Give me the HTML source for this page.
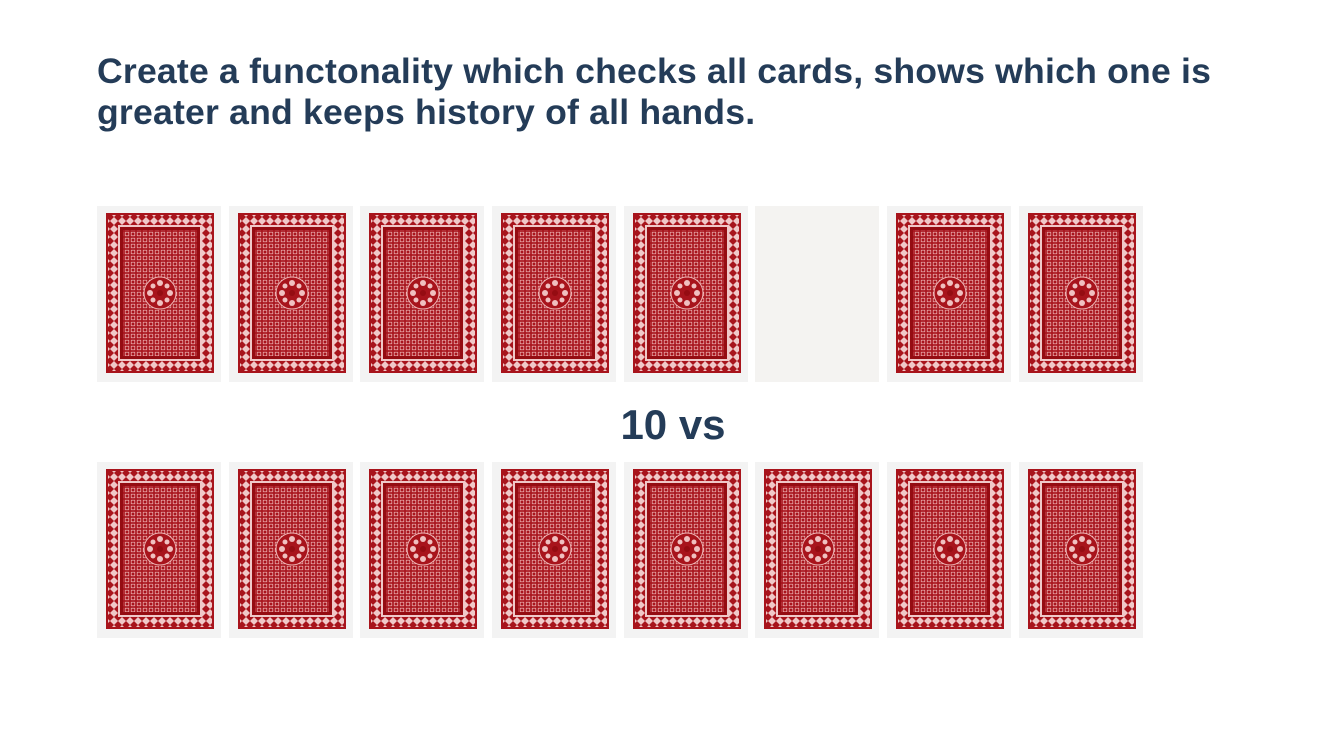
<!DOCTYPE html>
<html><head><style>
body{margin:0;width:1336px;height:733px;background:#fff;font-family:"Liberation Sans",sans-serif;overflow:hidden;position:relative}
h1{position:absolute;left:97px;top:51px;margin:0;font-size:35.6px;line-height:41px;color:#243c58;font-weight:bold;width:1150px;letter-spacing:0.2px}
.row{position:absolute;left:97px;display:flex;gap:7.7px}
.c{width:124px;height:176px;background:#f3f3f3;position:relative}
.c.e{background:#f4f3f1}
.c svg{position:absolute;left:9px;top:7px}
.vs{position:absolute;left:0;width:1346px;text-align:center;top:401px;font-size:42px;font-weight:bold;color:#243c58}
</style></head><body>
<h1>Create a functonality which checks all cards, shows which one is greater and keeps history of all hands.</h1>
<svg width="0" height="0" style="position:absolute">
<defs>
<pattern id="g" width="6" height="6" patternUnits="userSpaceOnUse"><rect width="6" height="6" fill="#a8141c"/><rect x="1.2" y="1.2" width="3.6" height="3.6" fill="none" stroke="#f0b8b8" stroke-width="0.7"/></pattern>
<pattern id="b" width="8" height="8" patternUnits="userSpaceOnUse"><rect width="8" height="8" fill="#f0c8c8"/><path d="M4 0L8 4L4 8L0 4Z" fill="#a8141c"/></pattern>
<symbol id="card" viewBox="0 0 108 160">
<rect x="0" y="0" width="108" height="160" fill="#a8141c"/>
<rect x="2" y="2" width="104" height="156" fill="url(#b)"/>
<rect x="12" y="12" width="84" height="136" fill="#f0c8c8"/>
<rect x="14" y="14" width="80" height="132" fill="#950c12"/>
<rect x="17" y="17" width="74" height="126" fill="url(#g)"/>
<circle cx="54" cy="80" r="16" fill="#a8141c" stroke="#f0b8b8" stroke-width="1"/>
<g fill="#f0c0c0"><circle cx="54" cy="70" r="3"/><circle cx="54" cy="90" r="3"/><circle cx="44" cy="80" r="3"/><circle cx="64" cy="80" r="3"/><circle cx="47" cy="73" r="2.5"/><circle cx="61" cy="73" r="2.5"/><circle cx="47" cy="87" r="2.5"/><circle cx="61" cy="87" r="2.5"/></g>
<circle cx="54" cy="80" r="3" fill="#950c12"/>
</symbol></defs></svg>
<div class="row" style="top:206px">
<div class="c"><svg width="108" height="160"><use href="#card"/></svg></div>
<div class="c"><svg width="108" height="160"><use href="#card"/></svg></div>
<div class="c"><svg width="108" height="160"><use href="#card"/></svg></div>
<div class="c"><svg width="108" height="160"><use href="#card"/></svg></div>
<div class="c"><svg width="108" height="160"><use href="#card"/></svg></div>
<div class="c e"></div>
<div class="c"><svg width="108" height="160"><use href="#card"/></svg></div>
<div class="c"><svg width="108" height="160"><use href="#card"/></svg></div>
</div>
<div class="vs">10 vs</div>
<div class="row" style="top:462px">
<div class="c"><svg width="108" height="160"><use href="#card"/></svg></div>
<div class="c"><svg width="108" height="160"><use href="#card"/></svg></div>
<div class="c"><svg width="108" height="160"><use href="#card"/></svg></div>
<div class="c"><svg width="108" height="160"><use href="#card"/></svg></div>
<div class="c"><svg width="108" height="160"><use href="#card"/></svg></div>
<div class="c"><svg width="108" height="160"><use href="#card"/></svg></div>
<div class="c"><svg width="108" height="160"><use href="#card"/></svg></div>
<div class="c"><svg width="108" height="160"><use href="#card"/></svg></div>
</div>
</body></html>
